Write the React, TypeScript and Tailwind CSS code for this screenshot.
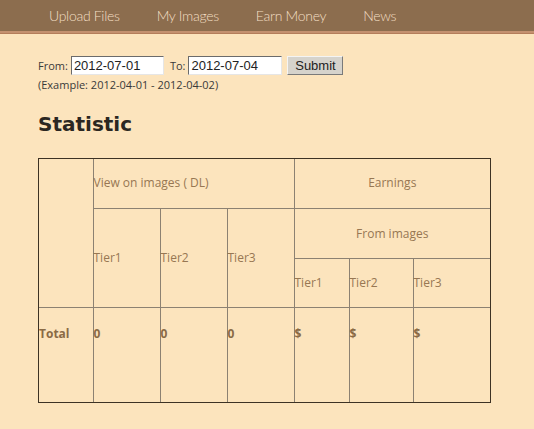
import React from "react";

const navItems = ["Upload Files", "My Images", "Earn Money", "News"];

const cell = "border border-[#8c8172] p-0 align-middle";

export default function App() {
  return (
    <div className="min-h-[429px] w-[534px] bg-[#fce4bd] font-['Open_Sans',sans-serif] text-[#3a3a3a]">
      {/* NAV */}
      <div className="h-[31px] bg-[#8c6d4e] flex items-center pl-[49px] gap-[37px] font-['Lato',sans-serif] font-light text-[14px] text-[#f3dfc4]">
        {navItems.map((n) => (
          <span key={n} className="tracking-[-0.3px]">
            {n}
          </span>
        ))}
      </div>
      <div className="h-[2px] bg-[#c4916f]"></div>
      <div className="h-[1px] bg-[#b47d5a]"></div>

      <div className="pl-[38px] pt-[22px]">
        {/* FILTER */}
        <form className="flex items-center text-[11px] leading-none">
          <span className="mr-[3px]">From:</span>
          <input
            defaultValue="2012-07-01"
            className="w-[93px] h-[19px] bg-white border border-t-[#6b6b6b] border-l-[#6b6b6b] border-b-[#e6e6e6] border-r-[#e6e6e6] px-[2px] font-['Liberation_Sans',sans-serif] text-[13px] text-[#222]"
          />
          <span className="ml-[6px] mr-[3px]">To:</span>
          <input
            defaultValue="2012-07-04"
            className="w-[94px] h-[19px] bg-white border border-t-[#6b6b6b] border-l-[#6b6b6b] border-b-[#e6e6e6] border-r-[#e6e6e6] px-[2px] font-['Liberation_Sans',sans-serif] text-[13px] text-[#222]"
          />
          <button
            type="button"
            className="ml-[5px] w-[56px] h-[19px] bg-[#d6d3cc] border border-t-[#f4f4f4] border-l-[#f4f4f4] border-b-[#7a7a7a] border-r-[#7a7a7a] font-['Liberation_Sans',sans-serif] text-[13px] text-[#222]"
          >
            Submit
          </button>
        </form>
        <p className="text-[11px] mt-[2px] text-[#3a3a3a]">(Example: 2012-04-01 - 2012-04-02)</p>

        <h2 className="mt-[18px] font-['DejaVu_Sans',sans-serif] font-bold text-[20px] leading-[24px] text-[#2b2722]">
          Statistic
        </h2>

        {/* TABLE */}
        <div className="mt-[22px] w-[453px] border border-[#3d3224]">
          <table className="w-full table-fixed border-collapse border-hidden text-[12px] text-[#977753]">
            <colgroup>
              <col className="w-[54px]" />
              <col className="w-[67px]" />
              <col className="w-[67px]" />
              <col className="w-[67px]" />
              <col className="w-[55px]" />
              <col className="w-[64px]" />
              <col />
            </colgroup>
            <tbody>
              <tr className="h-[50px]">
                <th rowSpan={3} className={cell}></th>
                <th colSpan={3} className={`${cell} text-left font-normal`}>
                  View on images ( DL)
                </th>
                <th colSpan={3} className={`${cell} text-center font-medium`}>
                  Earnings
                </th>
              </tr>
              <tr className="h-[50px]">
                <th rowSpan={2} className={`${cell} text-left font-normal`}>
                  Tier1
                </th>
                <th rowSpan={2} className={`${cell} text-left font-normal`}>
                  Tier2
                </th>
                <th rowSpan={2} className={`${cell} text-left font-normal`}>
                  Tier3
                </th>
                <th colSpan={3} className={`${cell} text-center font-medium`}>
                  From images
                </th>
              </tr>
              <tr className="h-[49px]">
                <th className={`${cell} text-left font-normal`}>Tier1</th>
                <th className={`${cell} text-left font-normal`}>Tier2</th>
                <th className={`${cell} text-left font-normal`}>Tier3</th>
              </tr>
              <tr className="h-[94px] text-[#8a6a45]">
                <td className={`${cell} !align-top pt-[17px] font-bold`}>Total</td>
                <td className={`${cell} !align-top pt-[17px] font-bold`}>0</td>
                <td className={`${cell} !align-top pt-[17px] font-bold`}>0</td>
                <td className={`${cell} !align-top pt-[17px] font-bold`}>0</td>
                <td className={`${cell} !align-top pt-[17px] font-bold`}>$</td>
                <td className={`${cell} !align-top pt-[17px] font-bold`}>$</td>
                <td className={`${cell} !align-top pt-[17px] font-bold`}>$</td>
              </tr>
            </tbody>
          </table>
        </div>
      </div>
    </div>
  );
}
